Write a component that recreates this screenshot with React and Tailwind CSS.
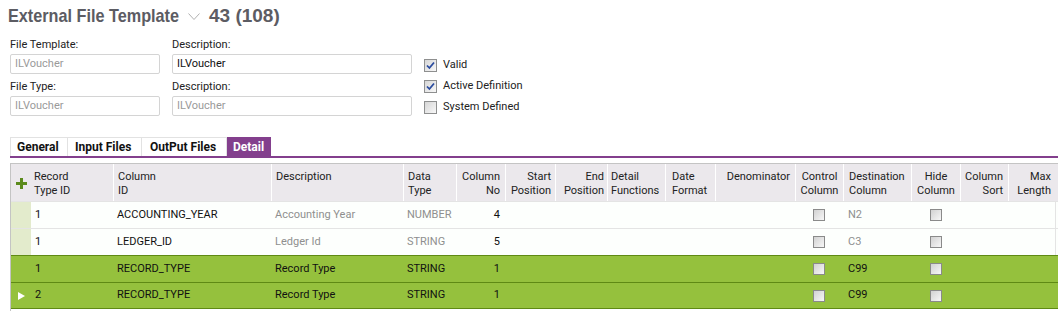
import React from "react";

const COLS =
  "grid grid-cols-[20px_82px_158px_132px_53px_49px_50px_52px_58px_50px_80px_48px_68px_49px_48px_48px]";

const headers = [
  { t: ["Record", "Type ID"], c: "text-left pl-[3px]", noSep: true },
  { t: ["Column", "ID"], c: "text-left pl-[4px]" },
  { t: ["Description"], c: "text-left pl-[4px]" },
  { t: ["Data", "Type"], c: "text-left pl-[4px]" },
  { t: ["Column", "No"], c: "text-right pr-[5px]" },
  { t: ["Start", "Position"], c: "text-right pr-[4px]" },
  { t: ["End", "Position"], c: "text-right pr-[3px]" },
  { t: ["Detail", "Functions"], c: "text-left pl-[3px]" },
  { t: ["Date", "Format"], c: "text-left pl-[6px]" },
  { t: ["Denominator"], c: "text-right pr-[5px]" },
  { t: ["Control", "Column"], c: "text-center" },
  { t: ["Destination", "Column"], c: "text-left pl-[5px]" },
  { t: ["Hide", "Column"], c: "text-center" },
  { t: ["Column", "Sort"], c: "text-right pr-[5px]" },
  { t: ["Max", "Length"], c: "text-right pr-[5px]" },
];

const rows = [
  { id: "1", col: "ACCOUNTING_YEAR", desc: "Accounting Year", type: "NUMBER", no: "4", dest: "N2", green: false },
  { id: "1", col: "LEDGER_ID", desc: "Ledger Id", type: "STRING", no: "5", dest: "C3", green: false },
  { id: "1", col: "RECORD_TYPE", desc: "Record Type", type: "STRING", no: "1", dest: "C99", green: true },
  { id: "2", col: "RECORD_TYPE", desc: "Record Type", type: "STRING", no: "1", dest: "C99", green: true, arrow: true },
];

function FormCheck({ checked, label }) {
  return (
    <div className="flex items-center h-[21px]">
      <div className="w-[13px] h-[13px] border border-[#8e8f8f] bg-gradient-to-br from-[#d6d6d6] to-[#f8f8f8] flex items-center justify-center">
        {checked && (
          <svg width="9" height="9" viewBox="0 0 9 9">
            <path d="M1 4.5 L3.4 7 L8 1.5" fill="none" stroke="#2a4b9e" strokeWidth="1.8" />
          </svg>
        )}
      </div>
      <span className="ml-[6px] text-[#222]">{label}</span>
    </div>
  );
}

function GridCheck() {
  return (
    <div className="w-[12px] h-[12px] border border-[#8a8a8a] bg-gradient-to-br from-[#d2d2d2] to-[#f7f7f7]" />
  );
}

function Input({ value, dark, w }) {
  return (
    <div
      className={`${w} h-[20px] border border-[#d4d4d4] rounded-[2px] bg-white flex items-center pl-[4px] ${
        dark ? "text-[#111]" : "text-[#9a9a9a]"
      }`}
    >
      {value}
    </div>
  );
}

const titleFont = { fontFamily: '"Liberation Sans", Arial, sans-serif' };

export default function App() {
  return (
    <div
      className="w-[1058px] h-[311px] bg-white overflow-hidden text-[11px]"
      style={{ fontFamily: 'Roboto, "Liberation Sans", Arial, sans-serif' }}
    >
      {/* Title */}
      <div className="h-[35px] pl-[8px] pt-[4px] flex items-start">
        <div className="w-[174px] h-[24px] overflow-visible">
          <span
            className="inline-block origin-left scale-x-[0.854] whitespace-nowrap text-[19px] leading-[24px] font-bold text-[#5c5c63]"
            style={titleFont}
          >
            External File Template
          </span>
        </div>
        <svg width="12" height="8" viewBox="0 0 12 8" className="ml-[6px] mt-[9px]">
          <polyline points="0.5,0.5 6,6.5 11.5,0.5" fill="none" stroke="#b0b0b0" strokeWidth="1" />
        </svg>
        <span
          className="ml-[9px] whitespace-nowrap text-[19px] leading-[24px] font-bold text-[#5c5c63]"
          style={titleFont}
        >
          43 (108)
        </span>
      </div>

      {/* Form */}
      <div className="flex pl-[10px] mt-[2px]">
        <div className="flex flex-col w-[162px]">
          <div className="h-[16px] leading-[16px] text-[#222]">File Template:</div>
          <div className="mt-[1px]"><Input value="ILVoucher" w="w-[150px]" /></div>
          <div className="mt-[5px] h-[16px] leading-[16px] text-[#222]">File Type:</div>
          <div className="mt-[1px]"><Input value="ILVoucher" w="w-[150px]" /></div>
        </div>
        <div className="flex flex-col w-[252px]">
          <div className="h-[16px] leading-[16px] text-[#222]">Description:</div>
          <div className="mt-[1px]"><Input value="ILVoucher" dark w="w-[240px]" /></div>
          <div className="mt-[5px] h-[16px] leading-[16px] text-[#222]">Description:</div>
          <div className="mt-[1px]"><Input value="ILVoucher" w="w-[240px]" /></div>
        </div>
        <div className="flex flex-col pt-[18px]">
          <FormCheck checked label="Valid" />
          <FormCheck checked label="Active Definition" />
          <FormCheck label="System Defined" />
        </div>
      </div>

      {/* Tabs */}
      <div className="ml-[10px] mt-[19px]">
        <div className="flex h-[19px] text-[12px] font-bold">
          <div className="w-[58px] border-l border-t border-r border-[#e2e2e2] flex items-center pl-[6px] text-[#111]">General</div>
          <div className="w-[74px] border-t border-r border-[#e2e2e2] flex items-center pl-[7px] text-[#111]">Input Files</div>
          <div className="w-[85px] border-t border-r border-[#e2e2e2] flex items-center pl-[8px] text-[#111]">OutPut Files</div>
          <div className="w-[44px] bg-[#833f8d] flex items-center pl-[6px] text-white">Detail</div>
        </div>
        <div className="h-[2px] bg-[#833f8d]" />
      </div>

      {/* Grid */}
      <div className="ml-[10px] mt-[5px] border-l border-[#c4c4c4] h-[200px]">
        <div className="border-t border-[#c4c4c4]">
          {/* Header */}
          <div className={`${COLS} h-[37px] bg-[#ebe8ec] text-[#222] leading-[14px]`}>
            <div className="flex items-center justify-center pt-[2px]">
              <svg width="11" height="11" viewBox="0 0 11 11">
                <rect x="4" y="0" width="3" height="11" fill="#5b8a1c" />
                <rect x="0" y="4" width="11" height="3" fill="#5b8a1c" />
              </svg>
            </div>
            {headers.map((h, i) => (
              <div
                key={i}
                className={`${h.noSep ? "" : "border-l border-white"} pt-[6px] ${h.c} whitespace-nowrap`}
              >
                {h.t.map((l, j) => (
                  <div key={j}>{l}</div>
                ))}
              </div>
            ))}
          </div>

          {/* Rows */}
          {rows.map((r, i) => {
            const base = r.green ? "bg-[#95c13d]" : "bg-[#fdfffd]";
            const border = r.green ? "border-[#5f8a14]" : "border-[#e4e4e4]";
            const sub = r.green ? "text-[#111]" : "text-[#8f8f8f]";
            return (
              <div
                key={i}
                className={`${COLS} h-[27px] border-t ${border} ${base} text-[#111] items-center ${
                  i === rows.length - 1 ? "border-b" : ""
                }`}
              >
                <div className={`h-full flex items-center justify-center ${r.green ? "" : "bg-[#e3ebcc]"}`}>
                  {r.arrow && (
                    <svg width="7" height="8" viewBox="0 0 7 8">
                      <polygon points="0,0 7,4 0,8" fill="#ffffff" />
                    </svg>
                  )}
                </div>
                <div className="pl-[4px]">{r.id}</div>
                <div className="pl-[4px]">{r.col}</div>
                <div className={`pl-[4px] ${sub}`}>{r.desc}</div>
                <div className={`pl-[4px] ${sub}`}>{r.type}</div>
                <div className="pr-[5px] text-right">{r.no}</div>
                <div />
                <div />
                <div />
                <div />
                <div />
                <div className="flex justify-center"><GridCheck /></div>
                <div className={`pl-[5px] ${sub}`}>{r.dest}</div>
                <div className="flex justify-center"><GridCheck /></div>
                <div />
                <div className={`h-full ${r.green ? "" : "border-r border-[#e4e4e4]"}`} />
              </div>
            );
          })}
        </div>
      </div>
    </div>
  );
}
